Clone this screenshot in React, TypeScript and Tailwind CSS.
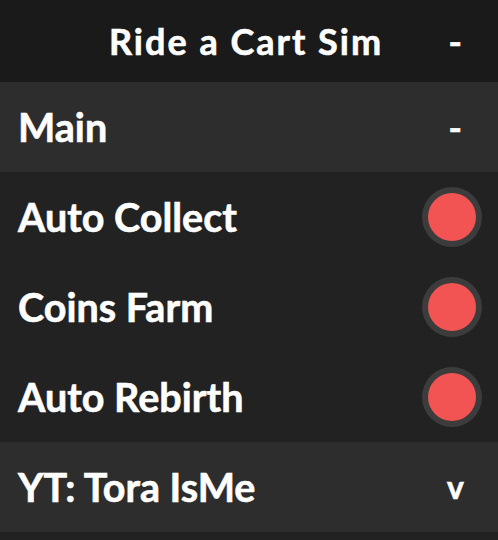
import React, { useState } from 'react';

function Toggle({ on, onClick }: { on: boolean; onClick: () => void }) {
    return (
        <button
            onClick={onClick}
            className="flex h-[60px] w-[60px] items-center justify-center rounded-full bg-[#3c3c3c]"
        >
            <span className={`block h-[48px] w-[48px] rounded-full ${on ? 'bg-[#4fd161]' : 'bg-[#f25454]'}`} />
        </button>
    );
}

function ToggleRow({ label }: { label: string }) {
    const [on, setOn] = useState(false);
    return (
        <div className="flex h-[90px] items-center justify-between bg-[#222222] pl-[18px] pr-[16px]">
            <span>{label}</span>
            <Toggle on={on} onClick={() => setOn(!on)} />
        </div>
    );
}

export default function App() {
    return (
        <div className="h-[540px] w-[498px] bg-[#222222] text-[39.5px] font-bold leading-none text-white [-webkit-text-stroke:0.6px_white]" style={{ fontFamily: 'Lato, "Noto Sans", sans-serif' }}>
            <div className="relative flex h-[82px] items-center justify-center bg-[#1a1a1a] text-[36px]">
                <span className="pr-[6px] tracking-[2px]">Ride a Cart Sim</span>
                <span className="absolute right-[36px]">-</span>
            </div>
            <div className="flex h-[90px] items-center justify-between bg-[#2d2d2d] pl-[18px] pr-[36px]">
                <span>Main</span>
                <span className="text-[36px]">-</span>
            </div>
            <ToggleRow label="Auto Collect" />
            <ToggleRow label="Coins Farm" />
            <ToggleRow label="Auto Rebirth" />
            <div className="flex h-[90px] items-center justify-between bg-[#2d2d2d] pl-[18px] pr-[34px]">
                <span>YT: Tora IsMe</span>
                <span className="text-[32px]">v</span>
            </div>
        </div>
    );
}
